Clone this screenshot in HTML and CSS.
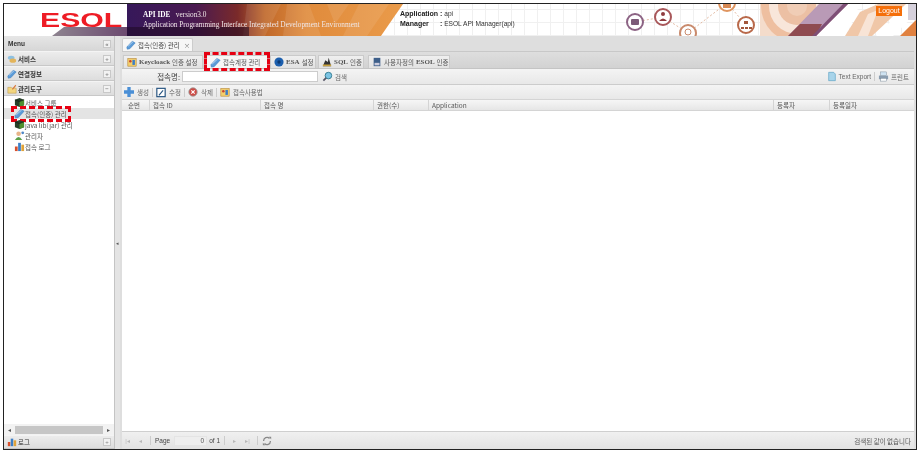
FILE: index.html
```html
<!DOCTYPE html>
<html>
<head>
  <title>ESOL API IDE</title>
  <meta name="viewport" content="width=device-width, initial-scale=1">
  <link rel="stylesheet" href="styles.css">
</head>
<body>
  <svg class="defs" width="0" height="0">
    <symbol id="pen" viewBox="0 0 12 12">
      <path d="M1 8.500 7.500 1.500 11 3.500 4.500 10.500 1.500 11Z" fill="#5b9bd8" stroke="#3f7fc0" stroke-width=".7"/>
      <path d="M2.500 7.500 8.500 2" stroke="#bcd9f2" stroke-width="1"/>
    </symbol>
    <symbol id="cube" viewBox="0 0 12 12">
      <path d="M1 3 6 1l5 2v6l-5 2-5-2Z" fill="#27402a"/>
      <path d="M6 5v6l5-2V3Z" fill="#4e8f2f"/>
      <path d="M1 3l5 2 5-2" fill="none" stroke="#111" stroke-width=".6"/>
    </symbol>
    <symbol id="chart" viewBox="0 0 12 12">
      <rect x="1" y="6" width="3" height="5" fill="#d9502c"/>
      <rect x="4.500" y="2" width="3" height="9" fill="#3d7fc6"/>
      <rect x="8" y="4" width="3" height="7" fill="#e0a33a"/>
    </symbol>
    <symbol id="keys" viewBox="0 0 12 12">
      <rect x="1" y="2" width="10" height="9" fill="#f4cf6c" stroke="#b5832a" stroke-width=".7"/>
      <circle cx="4" cy="5" r="1.500" fill="#c8402e"/>
      <rect x="6.500" y="3.500" width="3" height="6" fill="#3d7fc6"/>
    </symbol>
  </svg>

  <div class="frame">
    <header class="top">
      <div class="logo"><span class="logo-text">ESOL</span></div>
      <div class="banner">
        <svg class="facets" viewBox="0 0 276 32" width="276" height="32">
          <g fill="#fff" opacity=".09">
            <path d="M120 0h34l-16 32h-22Z"/>
            <path d="M160 0h22l12 32h-38Z"/>
            <path d="M200 0h22l-14 20Z"/>
            <path d="M232 0h30l-22 32h-24Z"/>
          </g>
          <path d="M0 23h122v9H0Z" fill="#1e0a20" opacity=".55"/>
        </svg>
        <p class="banner-title"><b>API IDE</b>&nbsp;&nbsp; version3.0</p>
        <p>Application Programming Interface Integrated Development Environment</p>
      </div>
      <div class="app-info">
        <p><b>Application :</b> api</p>
        <p><b class="mgr">Manager</b><b>:</b> ESOL API Manager(api)</p>
      </div>
      <svg class="deco" viewBox="607 4 309 32" width="309" height="32">
        <g fill="none" stroke="#dca88a" stroke-dasharray="2 2" stroke-width=".8">
          <path d="M635 22 663 17M663 17 688 33M688 33 727 3M727 3 746 25"/>
        </g>
        <g fill="#fff" stroke-width="2">
          <circle cx="635" cy="22" r="8" stroke="#8c6384"/>
          <circle cx="663" cy="17" r="8" stroke="#a8575a"/>
          <circle cx="688" cy="33" r="8" stroke="#c98a6c"/>
          <circle cx="727" cy="3" r="8" stroke="#df9560"/>
          <circle cx="746" cy="25" r="8" stroke="#b9694a"/>
        </g>
        <rect x="631" y="19" width="8" height="6" rx="1" fill="#7c5a78"/>
        <circle cx="663" cy="14" r="2" fill="#8f3b3f"/>
        <path d="M659 21q4-5 8 0Z" fill="#8f3b3f"/>
        <circle cx="688" cy="32" r="3" fill="none" stroke="#c98a6c"/>
        <rect x="723" y="4" width="8" height="4" fill="#d88a55"/>
        <path d="M744 21h4v3h-4ZM741 27h3v2h-3ZM745 27h3v2h-3ZM749 27h3v2h-3Z" fill="#a3573c"/>

        <svg x="760" y="4" width="88" height="32" viewBox="760 4 88 32">
          <rect x="760" y="4" width="88" height="32" fill="#f4dccb"/>
          <circle cx="797" cy="6" r="36" fill="#eebfa0"/>
          <circle cx="797" cy="6" r="28" fill="#f8e6da"/>
          <circle cx="797" cy="6" r="19" fill="#ecc0a4"/>
          <circle cx="797" cy="6" r="10" fill="#f0cdb6"/>
        </svg>
        <path d="M816 36 848 4H860L846 36Z" fill="#fff"/>
        <path d="M788 36 819 4H848L816 36Z" fill="#b99ab6"/>
        <path d="M788 36 800 24H822L816 36Z" fill="#8f4b50"/>
        <path d="M843 4H848L816 36H812Z" fill="#7e4f76"/>
        <path d="M845 36 860 12 878 4H906L872 36Z" fill="#f0c7a8"/>
        <path d="M858 36 868 14 878 10 868 36Z" fill="#f8e4d6"/>
        <path d="M893 36 916 14V4H908L876 36Z" fill="#fff"/>
        <path d="M900 36 916 20V36Z" fill="#e08140"/>
        <path d="M908 4h8v16l-8 0Z" fill="#d6d1dc"/>
      </svg>
      <a class="logout">Logout</a>
    </header>

    <div class="body">
      <aside class="side">
        <div class="side-head"><span>Menu</span><i class="mini">«</i></div>
        <div class="acc">
          <svg class="ic" width="10" height="10" viewBox="0 0 12 12"><ellipse cx="5" cy="4.500" rx="4" ry="2.500" fill="#8ec0e0"/><ellipse cx="7" cy="8" rx="4" ry="2.500" fill="#e3b45a"/></svg>
          <span>서비스</span><i class="mini">+</i>
        </div>
        <div class="acc">
          <svg class="ic" width="10" height="10"><use href="#pen"/></svg>
          <span>연결정보</span><i class="mini">+</i>
        </div>
        <div class="acc">
          <svg class="ic" width="10" height="10" viewBox="0 0 12 12"><path d="M1 4h4l1 1h5v6H1Z" fill="#f3d67e" stroke="#b9924a" stroke-width=".6"/><path d="M6 6 10 1l1 1-4 5Z" fill="#d9773a"/></svg>
          <span>관리도구</span><i class="mini">−</i>
        </div>
        <ul class="tree">
          <li><svg width="11" height="11"><use href="#cube"/></svg>서비스 그룹</li>
          <li class="sel marked"><svg width="11" height="11"><use href="#pen"/></svg>접속(인증) 관리</li>
          <li><svg width="11" height="11"><use href="#cube"/></svg>java lib(jar) 관리</li>
          <li><svg width="11" height="11" viewBox="0 0 12 12"><circle cx="5" cy="4" r="2.500" fill="#e8b58a"/><path d="M1 11q4-7 8 0Z" fill="#5aa04a"/><circle cx="9.500" cy="3" r="1.500" fill="#4e86c6"/></svg>관리자</li>
          <li><svg width="11" height="11"><use href="#chart"/></svg>접속 로그</li>
        </ul>
        <div class="hscroll"><i class="arr">◂</i><div class="thumb"></div><i class="arr">▸</i></div>
        <div class="acc acc-last">
          <svg class="ic" width="10" height="10"><use href="#chart"/></svg>
          <span>로그</span><i class="mini">+</i>
        </div>
      </aside>

      <div class="split"><i>◂</i></div>

      <main class="main">
        <div class="page-tabs">
          <div class="page-tab"><svg width="10" height="10"><use href="#pen"/></svg>접속(인증) 관리<i>×</i></div>
        </div>
        <div class="panel">
          <div class="sub-tabs">
            <div class="sub-tab"><svg width="10" height="10"><use href="#keys"/></svg><b>Keycloack</b> 인증 설정</div>
            <div class="sub-tab on marked"><svg width="11" height="11"><use href="#pen"/></svg>접속계정 관리</div>
            <div class="sub-tab"><svg width="10" height="10" viewBox="0 0 12 12"><circle cx="6" cy="6" r="5.500" fill="#1c5fae"/><circle cx="6" cy="6" r="2" fill="#0c3a73"/></svg><b>ESA</b> 설정</div>
            <div class="sub-tab"><svg width="10" height="10" viewBox="0 0 12 12"><path d="M1 11 4 4l3 2 1-5 3 10Z" fill="#333"/><rect x="1" y="9" width="10" height="2" fill="#c9a23c"/></svg><b>SQL</b> 인증</div>
            <div class="sub-tab"><svg width="10" height="10" viewBox="0 0 12 12"><rect x="2" y="1" width="8" height="10" fill="#3e5f8a"/><rect x="3" y="7" width="6" height="3" fill="#ccd"/></svg>사용자정의 <b>ESOL</b>인증</div>
          </div>
          <div class="search-bar">
            <label class="search-label">접속명:</label>
            <input class="search-input" type="text">
            <span class="tool"><svg width="11" height="11" viewBox="0 0 12 12"><circle cx="7" cy="5" r="3.600" fill="#7cc4e4" stroke="#2f7a8f"/><path d="M4.500 7.500 1.500 10.500" stroke="#556" stroke-width="2"/></svg>검색</span>
            <span class="tool push"><svg width="10" height="11" viewBox="0 0 12 12"><path d="M2 1h6l2 2v8H2Z" fill="#a8d4ea" stroke="#4f9abf" stroke-width=".7"/></svg>Text Export</span>
            <span class="sep"></span>
            <span class="tool"><svg width="11" height="11" viewBox="0 0 12 12"><rect x="1" y="5" width="10" height="4" fill="#8a9db0"/><rect x="3" y="1" width="6" height="4" fill="#cfe3f2" stroke="#789" stroke-width=".5"/><rect x="3" y="8" width="6" height="3" fill="#fff" stroke="#789" stroke-width=".5"/></svg>프린트</span>
          </div>
          <div class="action-bar">
            <span class="tool"><svg width="10" height="10" viewBox="0 0 12 12"><path d="M4 0h4v4h4v4H8v4H4V8H0V4h4Z" fill="#4a8fd6"/></svg>생성</span>
            <span class="sep"></span>
            <span class="tool"><svg width="10" height="11" viewBox="0 0 12 12"><rect x="1" y="1" width="10" height="10" fill="#fff" stroke="#24527f" stroke-width="1.400"/><path d="M3 9 8 3l1 1-5 6Z" fill="#24527f"/></svg>수정</span>
            <span class="sep"></span>
            <span class="tool"><svg width="10" height="10" viewBox="0 0 12 12"><circle cx="6" cy="6" r="5" fill="#cf4a44" stroke="#999"/><path d="M4 4 8 8M8 4 4 8" stroke="#fff" stroke-width="1.400"/></svg>삭제</span>
            <span class="sep"></span>
            <span class="tool"><svg width="10" height="10"><use href="#keys"/></svg>접속사용법</span>
          </div>
          <div class="grid-head">
            <div class="col">순번</div>
            <div class="col">접속 ID</div>
            <div class="col">접속 명</div>
            <div class="col">권한(수)</div>
            <div class="col">Application</div>
            <div class="col">등록자</div>
            <div class="col">등록일자</div>
          </div>
          <div class="grid-body"></div>
          <div class="pager">
            <i class="pg">|◂</i><i class="pg">◂</i><span class="sep"></span>
            <span>Page</span><input class="page-num" type="text" value="0"><span>of 1</span><span class="sep"></span>
            <i class="pg">▸</i><i class="pg">▸|</i><span class="sep"></span>
            <svg width="10" height="10" viewBox="0 0 12 12"><path d="M2 6a4 4 0 0 1 7-3M10 6a4 4 0 0 1-7 3" fill="none" stroke="#888" stroke-width="1.500"/><path d="M8 1h3v3ZM4 11H1V8Z" fill="#888"/></svg>
            <span class="pager-msg">검색된 값이 없습니다</span>
          </div>
        </div>
      </main>
    </div>
  </div>
</body>
</html>
```

FILE: styles.css
```css
/* Common styles */
html, body {
  height: 100%;
}

body {
  margin: 0;
  padding: 3px 4px 5px 3px;
  box-sizing: border-box;
  background-color: #ffffff;
  color: #444444;
  font-family: "Noto Sans CJK KR", "Liberation Sans", sans-serif;
  font-size: 6.500px;
  overflow: hidden;
}

p {
  margin: 0;
}

i {
  font-style: normal;
}

svg {
  flex: none;
}

.defs {
  position: absolute;
}

.frame {
  height: 100%;
  box-sizing: border-box;
  border: 1px solid #222222;
  display: flex;
  flex-direction: column;
  filter: blur(0.4px);
}

/* Header */
.top {
  position: relative;
  flex: none;
  height: 32px;
  display: flex;
  background-color: #ffffff;
  background-image:
    repeating-linear-gradient(90deg, #f0f0f0 0 1px, transparent 1px 13px),
    repeating-linear-gradient(0deg, #f0f0f0 0 1px, transparent 1px 13px);
  overflow: hidden;
}

.logo {
  position: relative;
  width: 123px;
  flex: none;
  background-color: #ffffff;
  overflow: hidden;
}

.logo::after {
  content: "";
  position: absolute;
  left: 48px;
  right: 0;
  bottom: 0;
  height: 9px;
  background: linear-gradient(90deg, #8e8490, #6c4a70);
  clip-path: polygon(12px 0, 100% 0, 100% 100%, 0 100%);
}

.logo-text {
  display: block;
  margin: 5px 0 0 36px;
  width: 58px;
  color: #ee1c25;
  font-family: "Liberation Sans", sans-serif;
  font-size: 21px;
  font-weight: 700;
  line-height: 21px;
  transform: scaleX(1.44);
  transform-origin: left center;
}

.banner {
  position: relative;
  width: 276px;
  flex: none;
  box-sizing: border-box;
  padding: 6px 0 0 16px;
  background: linear-gradient(90deg, #36185a 0%, #4a1a50 25%, #7a2a2a 40%, #c0682a 50%, #e08b3c 65%, #ea9b4a 100%);
  clip-path: polygon(0 0, 100% 0, 92% 100%, 0 100%);
  color: #efe6e6;
  font-family: "Liberation Serif", serif;
  font-size: 7.300px;
  line-height: 10px;
}

.banner p {
  position: relative;
  white-space: nowrap;
}

.facets {
  position: absolute;
  left: 0;
  top: 0;
}

.banner-title b {
  color: #ffffff;
}

.app-info {
  width: 207px;
  flex: none;
  margin-left: -3px;
  padding-top: 5px;
  color: #333333;
  font-family: "Liberation Sans", sans-serif;
  font-size: 6.600px;
  line-height: 10px;
}

.app-info b {
  color: #222222;
  font-size: 7px;
}

.mgr {
  display: inline-block;
  width: 40px;
}

.deco {
  flex: none;
}

.logout {
  position: absolute;
  top: 2px;
  right: 14px;
  width: 26px;
  height: 10px;
  background-color: #f56f0a;
  color: #ffffff;
  font-family: "Liberation Sans", sans-serif;
  font-size: 7px;
  line-height: 10px;
  text-align: center;
}

/* Layout */
.body {
  flex: 1;
  min-height: 0;
  display: flex;
  background-color: #dcdcdc;
}

/* Left menu */
.side {
  width: 111px;
  flex: none;
  display: flex;
  flex-direction: column;
  border-right: 1px solid #c4c4c4;
  box-sizing: border-box;
  background-color: #ffffff;
}

.side-head {
  height: 15px;
  display: flex;
  align-items: center;
  justify-content: space-between;
  padding: 0 3px 0 4px;
  background: linear-gradient(#e6e6e6, #d6d6d6);
  color: #333333;
  font-family: "Liberation Sans", sans-serif;
  font-weight: 700;
}

.acc {
  height: 15px;
  flex: none;
  display: flex;
  align-items: center;
  gap: 1px;
  padding: 0 3px;
  box-sizing: border-box;
  border-top: 1px solid #f4f4f4;
  border-bottom: 1px solid #c8c8c8;
  background: linear-gradient(#ececec, #dddddd);
  color: #333333;
  font-weight: 700;
}

.acc span {
  flex: 1;
}

.mini {
  width: 8px;
  height: 8px;
  box-sizing: border-box;
  display: flex;
  align-items: center;
  justify-content: center;
  border: 1px solid #c8c8c8;
  background-color: #f2f2f2;
  color: #888888;
  font-size: 6px;
  line-height: 1;
  font-family: "Liberation Sans", sans-serif;
}

.tree {
  flex: 1;
  margin: 0;
  padding: 1px 0 0;
  list-style: none;
}

.tree li {
  position: relative;
  height: 11px;
  display: flex;
  align-items: center;
  padding-left: 10px;
  color: #555555;
  white-space: nowrap;
}

.tree li.sel {
  background-color: #e4e4e4;
}

/* Red dashed call-outs */
.marked::after {
  content: "";
  position: absolute;
  border: 3px dashed #e60012;
  pointer-events: none;
}

.tree .marked::after {
  left: 7px;
  top: -2px;
  width: 54px;
  height: 10px;
}

.sub-tab.marked::after {
  left: -3px;
  top: -4px;
  width: 60px;
  height: 13px;
}

.hscroll {
  height: 11px;
  flex: none;
  display: flex;
  align-items: center;
  background-color: #f2f2f2;
}

.arr {
  width: 11px;
  text-align: center;
  color: #555555;
  font-size: 6px;
}

.thumb {
  flex: 1;
  height: 8px;
  background-color: #c6c6c6;
}

.acc-last {
  height: 14px;
  font-weight: 400;
}

.split {
  width: 5px;
  flex: none;
  display: flex;
  align-items: center;
  justify-content: center;
  background-color: #e4e4e4;
  color: #555555;
  font-size: 5px;
}

/* Main */
.main {
  flex: 1;
  min-width: 0;
  display: flex;
  flex-direction: column;
  background-color: #dedede;
}

.page-tabs {
  height: 15px;
  flex: none;
  display: flex;
  align-items: flex-end;
  padding-left: 2px;
}

.page-tab {
  height: 13px;
  width: 71px;
  box-sizing: border-box;
  display: flex;
  align-items: center;
  gap: 2px;
  padding: 0 3px;
  background-color: #f6f6f6;
  border: 1px solid #cccccc;
  border-bottom: 0;
  border-radius: 2px 2px 0 0;
  color: #444444;
  white-space: nowrap;
}

.page-tab i {
  margin-left: 2px;
  color: #888888;
}

.panel {
  flex: 1;
  min-height: 0;
  display: flex;
  flex-direction: column;
  border-top: 1px solid #c8c8c8;
  margin: 0 2px;
}

.sub-tabs {
  height: 16px;
  flex: none;
  display: flex;
  align-items: flex-end;
  gap: 2px;
  padding-left: 1px;
  background: linear-gradient(#dedede, #d2d2d2);
  border-bottom: 1px solid #c4c4c4;
}

.sub-tab {
  position: relative;
  height: 13px;
  display: flex;
  align-items: center;
  gap: 2px;
  padding: 0 3px;
  box-sizing: border-box;
  background: linear-gradient(#efefef, #e2e2e2);
  border: 1px solid #cacaca;
  border-bottom: 0;
  color: #555555;
  white-space: nowrap;
}

.sub-tab b {
  font-family: "Liberation Serif", serif;
  font-size: 7px;
}

.sub-tab.on {
  background-color: #f6f6f6;
  background-image: none;
}

.sub-tab:nth-child(1) { width: 80px; }
.sub-tab:nth-child(2) { width: 62px; margin-left: 1px; }
.sub-tab:nth-child(3) { width: 46px; }
.sub-tab:nth-child(4) { width: 46px; }
.sub-tab:nth-child(5) { width: 82px; margin-left: 2px; }

.search-bar, .action-bar {
  flex: none;
  display: flex;
  align-items: center;
  background: linear-gradient(#f4f4f4, #e8e8e8);
  border-bottom: 1px solid #cccccc;
  padding-right: 5px;
}

.search-bar {
  height: 16px;
  box-sizing: border-box;
}

.action-bar {
  height: 14px;
  box-sizing: border-box;
  padding-left: 2px;
  border-bottom: 0;
}

.action-bar .tool {
  gap: 3px;
}

.search-label {
  width: 58px;
  text-align: right;
  color: #444444;
  font-size: 7.500px;
  margin-right: 2px;
}

.search-input {
  width: 136px;
  height: 11px;
  box-sizing: border-box;
  padding: 0;
  border: 1px solid #cccccc;
  background-color: #ffffff;
  margin-right: 4px;
}

.tool {
  display: inline-flex;
  align-items: center;
  gap: 2px;
  color: #666666;
}

.tool.push {
  margin-left: auto;
  font-family: "Liberation Sans", sans-serif;
}

.sep {
  width: 1px;
  height: 9px;
  margin: 0 3px;
  background-color: #cccccc;
  flex: none;
}

/* Grid */
.grid-head {
  height: 12px;
  flex: none;
  display: grid;
  grid-template-columns: 28px 111px 113px 55px 345px 56px 1fr;
  background: linear-gradient(#f6f6f6, #e6e6e6);
  border-top: 1px solid #d4d4d4;
  border-bottom: 1px solid #d4d4d4;
  box-sizing: border-box;
}

.col {
  padding-left: 3px;
  border-right: 1px solid #d4d4d4;
  line-height: 10px;
  color: #555555;
}

.col:first-child {
  padding-left: 6px;
}

.col:last-child {
  border-right: 0;
}

.grid-body {
  flex: 1;
  min-height: 0;
  background-color: #ffffff;
}

.pager {
  height: 18px;
  flex: none;
  display: flex;
  align-items: center;
  gap: 2px;
  padding: 0 3px 0 0;
  background: linear-gradient(#f0f0f0, #e2e2e2);
  border-top: 1px solid #cfcfcf;
  box-sizing: border-box;
  font-family: "Liberation Sans", sans-serif;
  color: #444444;
}

.pager .sep {
  margin: 0 2px;
}

.pg {
  width: 11px;
  text-align: center;
  color: #b8b8b8;
  font-size: 6px;
}

.page-num {
  width: 33px;
  height: 10px;
  box-sizing: border-box;
  margin: 0 0 0 2px;
  padding: 0 2px;
  border: 1px solid #e4e4e4;
  background-color: #eeeeee;
  color: #555555;
  font-size: 6.500px;
  text-align: right;
}

.pager-msg {
  margin-left: auto;
  font-family: "Noto Sans CJK KR", sans-serif;
  color: #555555;
}
```
